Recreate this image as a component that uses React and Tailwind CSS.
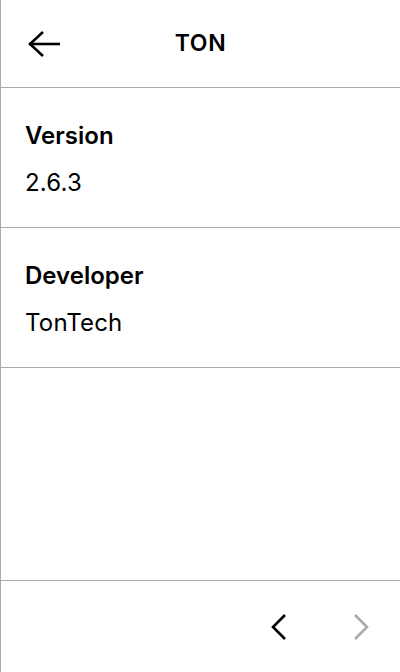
export default function App() {
  const rows = [
    { label: 'Version', value: '2.6.3' },
    { label: 'Developer', value: 'TonTech' },
  ];

  return (
    <div className="w-[400px] h-[672px] flex flex-col bg-white border-l border-[#aaaaaa] text-black font-['Inter','Liberation_Sans',sans-serif]">
      <div className="h-[88px] shrink-0 border-b border-[#aaaaaa] grid grid-cols-[80px_1fr_80px] items-center">
        <button className="pl-[26px] h-full flex items-center">
          <svg width="34" height="28" viewBox="0 0 34 28" fill="none" stroke="currentColor" strokeWidth="2.6" strokeLinecap="butt">
            <path d="M2 14H33" />
            <path d="M16 2L3 14L16 26" />
          </svg>
        </button>
        <h1 className="text-center text-[23px] font-semibold tracking-[0.6px]">TON</h1>
        <div />
      </div>

      {rows.map(r => (
        <div key={r.label} className="h-[140px] shrink-0 border-b border-[#aaaaaa] px-6 flex flex-col justify-center gap-[15px] pt-[3px]">
          <div className="text-[24px] leading-[32px] font-semibold">{r.label}</div>
          <div className="text-[24px] leading-[32px] tracking-[0.2px]">{r.value}</div>
        </div>
      ))}

      <div className="flex-1" />

      <div className="h-[92px] shrink-0 border-t border-[#aaaaaa] flex items-center justify-end pr-[30px] gap-[64px]">
        <button>
          <svg width="18" height="28" viewBox="0 0 18 28" fill="none" stroke="#000" strokeWidth="2.6">
            <path d="M15 2L3 14L15 26" />
          </svg>
        </button>
        <button>
          <svg width="18" height="28" viewBox="0 0 18 28" fill="none" stroke="#aaaaaa" strokeWidth="2.6">
            <path d="M3 2L15 14L3 26" />
          </svg>
        </button>
      </div>
    </div>
  );
}
